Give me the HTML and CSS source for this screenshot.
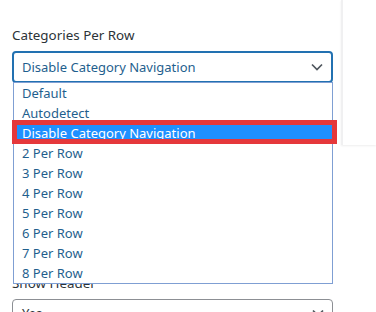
FILE: index.html
```html
<!DOCTYPE html>
<html lang="en">
<head>
<meta charset="utf-8">
<title>Categories Per Row</title>
<link rel="stylesheet" href="styles.css">
</head>
<body>
<div class="layout">
  <main class="panel">
    <div class="field">
      <label class="field-label">Categories Per Row</label>
      <div class="select is-focused">
        <span class="select-value">Disable Category Navigation</span>
        <svg class="chevron" width="12" height="8" viewBox="0 0 12 8"><polyline points="1,1.5 6,6.5 11,1.5" fill="none" stroke="#50575e" stroke-width="1.7"/></svg>
      </div>
    </div>
    <div class="field">
      <label class="field-label">Subcategory Display</label>
      <div class="select">
        <span class="select-value">Default</span>
        <svg class="chevron" width="12" height="8" viewBox="0 0 12 8"><polyline points="1,1.5 6,6.5 11,1.5" fill="none" stroke="#50575e" stroke-width="1.7"/></svg>
      </div>
    </div>
    <div class="field">
      <label class="field-label">Show Category Count</label>
      <div class="select">
        <span class="select-value">Yes</span>
        <svg class="chevron" width="12" height="8" viewBox="0 0 12 8"><polyline points="1,1.5 6,6.5 11,1.5" fill="none" stroke="#50575e" stroke-width="1.7"/></svg>
      </div>
    </div>
    <div class="field">
      <label class="field-label">Show Header</label>
      <div class="select">
        <span class="select-value">Yes</span>
        <svg class="chevron" width="12" height="8" viewBox="0 0 12 8"><polyline points="1,1.5 6,6.5 11,1.5" fill="none" stroke="#50575e" stroke-width="1.7"/></svg>
      </div>
    </div>

    <ul class="dropdown">
      <li class="option">Default</li>
      <li class="option">Autodetect</li>
      <li class="option is-highlighted">Disable Category Navigation</li>
      <li class="option">2 Per Row</li>
      <li class="option">3 Per Row</li>
      <li class="option">4 Per Row</li>
      <li class="option">5 Per Row</li>
      <li class="option">6 Per Row</li>
      <li class="option">7 Per Row</li>
      <li class="option">8 Per Row</li>
    </ul>
    <div class="annotation"></div>
  </main>
  <aside class="side-card"></aside>
</div>
</body>
</html>
```

FILE: styles.css
```css
* { box-sizing: border-box; }

html, body {
  margin: 0;
  padding: 0;
  background: #ffffff;
  overflow: hidden;
}

body {
  font-family: "Noto Sans", "Open Sans", "DejaVu Sans", sans-serif;
  font-size: 13px;
  color: #3c434a;
}

.layout {
  display: flex;
  align-items: flex-start;
  height: 312px;
}

.panel {
  position: relative;
  width: 340px;
  flex: none;
  padding: 26px 7px 0 12px;
}

.side-card {
  flex: 1;
  height: 145px;
  margin-left: 1px;
  background: #ffffff;
  border-left: 2px solid #f0f0f1;
  box-shadow: 0 1px 2px rgba(0, 0, 0, 0.07);
}

.field {
  margin-bottom: 25.67px;
}

.field-label {
  display: block;
  font-size: 13.4px;
  line-height: 18px;
  margin-bottom: 7px;
  color: #2c3338;
}

.select {
  display: flex;
  align-items: center;
  justify-content: space-between;
  height: 32px;
  padding: 0 8px 4px 9px;
  border: 1px solid #8c8f94;
  border-radius: 4px;
  color: #2c3338;
  background: #ffffff;
}

.select.is-focused {
  border: 2px solid #2271b1;
  padding: 0 8px 0 8px;
  color: #1f5f8e;
}

.select-value {
  font-size: 13px;
  line-height: 18px;
}

.chevron {
  display: block;
  flex: none;
}

.dropdown {
  position: absolute;
  top: 82px;
  left: 13px;
  width: 320px;
  margin: 0;
  padding: 0;
  list-style: none;
  background: #ffffff;
  border: 1px solid #7f9fd3;
  box-shadow: -1px 0 0 #ffffff;
}

.option {
  height: 20px;
  line-height: 20px;
  padding-left: 8px;
  font-size: 13px;
  color: #1f5f8e;
  white-space: nowrap;
}

.option.is-highlighted {
  background: #1e90ff;
  color: #ffffff;
}

.annotation {
  position: absolute;
  top: 120px;
  left: 12px;
  width: 325px;
  height: 24px;
  border: 5px solid #e5383b;
}
```
